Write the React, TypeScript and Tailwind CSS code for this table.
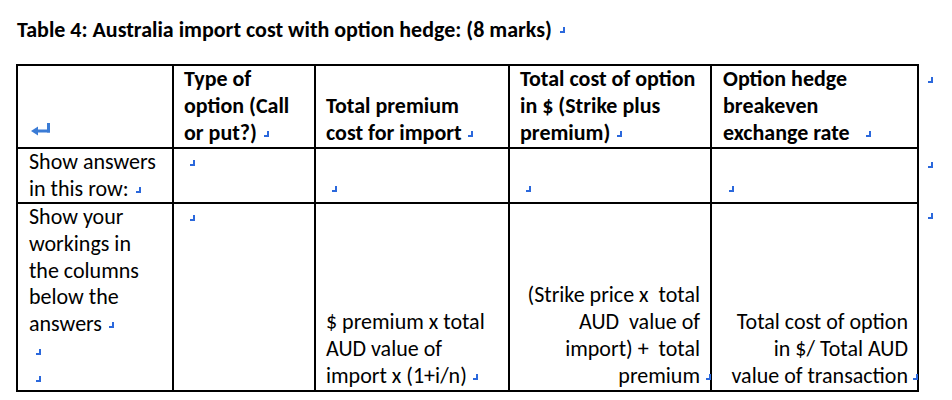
import React from "react";

function Mark({ className }: { className: string }) {
  return (
    <span
      className={
        "inline-block w-[5px] h-[6px] border-r-2 border-b-2 border-[#2b68dc] align-baseline " +
        className
      }
    />
  );
}

function Line({ children, className }: { children?: React.ReactNode; className?: string }) {
  return <div className={"whitespace-pre h-[26.86px] " + (className ?? "")}>{children}</div>;
}

export default function App() {
  return (
    <div className="min-h-[400px] bg-white pl-[16px] pt-[17px] text-black font-['Carlito','Lato',sans-serif] text-[22px] leading-[26.86px]">
      <div className="font-bold pl-[1px] whitespace-pre">
        Table 4: Australia import cost with option hedge: (8 marks)
        <Mark className="ml-[8px] mb-[4px]" />
      </div>
      <div className="mt-[20px] flex">
        <div className="grid grid-cols-[156px_142px_194px_202px_207px] grid-rows-[83px_55px_188px] border-l-2 border-t-2 border-black">
          {/* Header row */}
          <div className="border-r-2 border-b-2 border-black pl-[11px] flex flex-col justify-end">
            <Line>
              <svg className="block mt-[3px] ml-[2px]" width="20" height="14" viewBox="0 0 20 14">
                <polygon points="0,8 7,3.5 7,12.5" fill="#3a7bd5" />
                <rect x="6" y="6.5" width="13" height="3" fill="#3a7bd5" />
                <rect x="16" y="0" width="3" height="9.5" fill="#3a7bd5" />
              </svg>
            </Line>
          </div>
          <div className="border-r-2 border-b-2 border-black pl-[10px] flex flex-col justify-end font-bold">
            <Line>Type of</Line>
            <Line>option (Call</Line>
            <Line>
              or put?)
              <Mark className="ml-[7px] mb-[3px]" />
            </Line>
          </div>
          <div className="border-r-2 border-b-2 border-black pl-[10px] flex flex-col justify-end font-bold">
            <Line>Total premium</Line>
            <Line>
              cost for import
              <Mark className="ml-[6px] mb-[3px]" />
            </Line>
          </div>
          <div className="border-r-2 border-b-2 border-black pl-[10px] flex flex-col justify-end font-bold">
            <Line>Total cost of option</Line>
            <Line>in $ (Strike plus</Line>
            <Line>
              premium)
              <Mark className="ml-[7px] mb-[3px]" />
            </Line>
          </div>
          <div className="border-r-2 border-b-2 border-black pl-[11px] flex flex-col justify-end font-bold">
            <Line>Option hedge</Line>
            <Line>breakeven</Line>
            <Line>
              exchange rate
              <Mark className="ml-[16px] mb-[3px]" />
            </Line>
          </div>

          {/* Answers row */}
          <div className="border-r-2 border-b-2 border-black pl-[11px] flex flex-col">
            <Line>Show answers</Line>
            <Line>
              in this row:
              <Mark className="ml-[7px] mb-[3px]" />
            </Line>
          </div>
          <div className="border-r-2 border-b-2 border-black pl-[10px] flex flex-col">
            <Line>
              <Mark className="ml-[6px] mb-[3px]" />
            </Line>
          </div>
          <div className="border-r-2 border-b-2 border-black pl-[10px] flex flex-col justify-end">
            <Line>
              <Mark className="ml-[6px] mb-[3px]" />
            </Line>
          </div>
          <div className="border-r-2 border-b-2 border-black pl-[10px] flex flex-col justify-end">
            <Line>
              <Mark className="ml-[6px] mb-[3px]" />
            </Line>
          </div>
          <div className="border-r-2 border-b-2 border-black pl-[11px] flex flex-col justify-end">
            <Line>
              <Mark className="ml-[6px] mb-[3px]" />
            </Line>
          </div>

          {/* Workings row */}
          <div className="border-r-2 border-b-2 border-black pl-[11px] flex flex-col">
            <Line>Show your</Line>
            <Line>workings in</Line>
            <Line>the columns</Line>
            <Line>below the</Line>
            <Line>
              answers
              <Mark className="ml-[7px] mb-[3px]" />
            </Line>
            <Line>
              <Mark className="ml-[7px] mb-[3px]" />
            </Line>
            <Line>
              <Mark className="ml-[7px] mb-[3px]" />
            </Line>
          </div>
          <div className="border-r-2 border-b-2 border-black pl-[10px] flex flex-col">
            <Line>
              <Mark className="ml-[6px] mb-[3px]" />
            </Line>
          </div>
          <div className="border-r-2 border-b-2 border-black pl-[10px] flex flex-col justify-end">
            <Line>$ premium x total</Line>
            <Line>AUD value of</Line>
            <Line>
              import x (1+i/n)
              <Mark className="ml-[6px] mb-[3px]" />
            </Line>
          </div>
          <div className="border-r-2 border-b-2 border-black pr-[10px] flex flex-col justify-end text-right">
            <Line>(Strike price x  total</Line>
            <Line>AUD  value of</Line>
            <Line>import) +  total</Line>
            <Line>
              premium
              <Mark className="ml-[6px] mr-[-11px] mb-[3px]" />
            </Line>
          </div>
          <div className="border-r-2 border-b-2 border-black pr-[9px] flex flex-col justify-end text-right">
            <Line>Total cost of option</Line>
            <Line>in $/ Total AUD</Line>
            <Line>
              value of transaction
              <Mark className="ml-[5px] mr-[-10px] mb-[3px]" />
            </Line>
          </div>
        </div>
        <div className="ml-[9px] flex flex-col">
          <Mark className="mt-[13px]" />
          <Mark className="mt-[79px]" />
          <Mark className="mt-[45px]" />
        </div>
      </div>
    </div>
  );
}
